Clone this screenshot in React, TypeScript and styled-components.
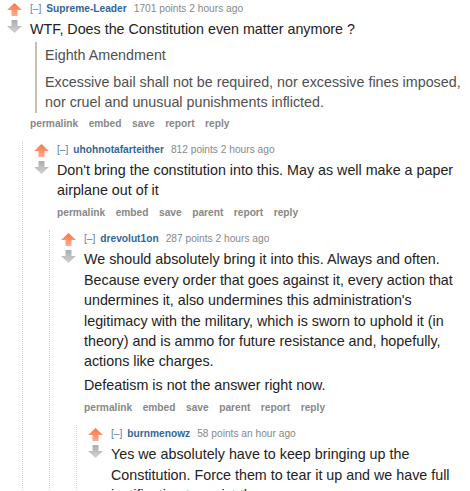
import React, { useId } from "react";
import styled, { createGlobalStyle } from "styled-components";

const GlobalStyle = createGlobalStyle`
  html, body {
    margin: 0;
    padding: 0;
    background: #fff;
    overflow: hidden;
  }
  body {
    font-family: "Liberation Sans", Arial, Helvetica, sans-serif;
  }
`;

type Block = { quote?: string[]; text?: string };

interface CommentData {
  author: string;
  score: string;
  age: string;
  body: Block[];
  buttons: string[];
  replies?: CommentData[];
}

const Page = styled.div`
  padding-right: 5px;
`;

const CommentBox = styled.div`
  padding-top: 2px;
`;

const Row = styled.div`
  display: flex;
`;

const Midcol = styled.div`
  display: flex;
  flex-direction: column;
  gap: 4px;
  width: 30px;
  flex-shrink: 0;
  padding: 1px 0 0 7px;
  box-sizing: border-box;

  svg {
    display: block;
  }
`;

const Entry = styled.div`
  flex: 1;
  min-width: 0;
`;

const Tagline = styled.div`
  font-size: 10.2px;
  line-height: 13px;
  color: #888;
  white-space: nowrap;
`;

const Expand = styled.span`
  color: #5b82b0;
  margin-right: 5px;
`;

const Author = styled.span`
  color: #369;
  font-weight: bold;
  margin-right: 7px;
`;

const Md = styled.div`
  margin-top: 4px;
  font-size: 14.3px;
  line-height: 20.4px;
  color: #222;

  p {
    margin: 0 0 3px;
  }

  > :last-child,
  blockquote > :last-child {
    margin-bottom: 0;
  }

  > blockquote:last-child {
    margin-bottom: -2px;
  }
`;

const Quote = styled.blockquote`
  margin: 0 0 3px 5px;
  padding: 3px 0 0 8px;
  border-left: 2px solid #c5c1ad;
  color: #4f4f4f;

  p {
    margin-bottom: 6px;
  }
`;

const Buttons = styled.ul`
  display: flex;
  gap: 10.5px;
  margin: 6px 0 0;
  padding: 0;
  list-style: none;
  font-size: 10.2px;
  line-height: 14px;
  font-weight: bold;
  color: #888;
`;

const Replies = styled.div`
  margin: 10px 0 0 22px;
  padding-left: 4px;
  border-left: 1px dotted #ccccf5;
`;

function Arrow({ down }: { down?: boolean }) {
  const id = useId();
  const stops = down ? ["#adadad", "#d2d2d2"] : ["#ff7440", "#ffac8e"];
  return (
    <svg width="15" height="13" viewBox="0 0 15 13">
      <defs>
        <linearGradient id={id} x1="0" y1="0" x2="0" y2="1">
          <stop offset="0" stopColor={stops[0]} />
          <stop offset="1" stopColor={stops[1]} />
        </linearGradient>
      </defs>
      <path
        d={
          down
            ? "M4.5 0H10.5V6H15L7.5 13L0 6H4.5Z"
            : "M7.5 0L15 7H10.5V13H4.5V7H0Z"
        }
        fill={`url(#${id})`}
      />
    </svg>
  );
}

function Comment({ data }: { data: CommentData }) {
  return (
    <CommentBox>
      <Row>
        <Midcol>
          <Arrow />
          <Arrow down />
        </Midcol>
        <Entry>
          <Tagline>
            <Expand>[–]</Expand>
            <Author>{data.author}</Author>
            {data.score} {data.age}
          </Tagline>
          <Md>
            {data.body.map((b, i) =>
              b.quote ? (
                <Quote key={i}>
                  {b.quote.map((q, j) => (
                    <p key={j}>{q}</p>
                  ))}
                </Quote>
              ) : (
                <p key={i}>{b.text}</p>
              )
            )}
          </Md>
          <Buttons>
            {data.buttons.map((b) => (
              <li key={b}>{b}</li>
            ))}
          </Buttons>
        </Entry>
      </Row>
      {data.replies?.map((r) => (
        <Replies key={r.author}>
          <Comment data={r} />
        </Replies>
      ))}
    </CommentBox>
  );
}

const childButtons = ["permalink", "embed", "save", "parent", "report", "reply"];

const thread: CommentData = {
  author: "Supreme-Leader",
  score: "1701 points",
  age: "2 hours ago",
  body: [
    { text: "WTF, Does the Constitution even matter anymore ?" },
    {
      quote: [
        "Eighth Amendment",
        "Excessive bail shall not be required, nor excessive fines imposed, nor cruel and unusual punishments inflicted.",
      ],
    },
  ],
  buttons: ["permalink", "embed", "save", "report", "reply"],
  replies: [
    {
      author: "uhohnotafarteither",
      score: "812 points",
      age: "2 hours ago",
      body: [
        {
          text: "Don't bring the constitution into this. May as well make a paper airplane out of it",
        },
      ],
      buttons: childButtons,
      replies: [
        {
          author: "drevolut1on",
          score: "287 points",
          age: "2 hours ago",
          body: [
            {
              text: "We should absolutely bring it into this. Always and often. Because every order that goes against it, every action that undermines it, also undermines this administration's legitimacy with the military, which is sworn to uphold it (in theory) and is ammo for future resistance and, hopefully, actions like charges.",
            },
            { text: "Defeatism is not the answer right now." },
          ],
          buttons: childButtons,
          replies: [
            {
              author: "burnmenowz",
              score: "58 points",
              age: "an hour ago",
              body: [
                {
                  text: "Yes we absolutely have to keep bringing up the Constitution. Force them to tear it up and we have full justification to resist them.",
                },
              ],
              buttons: childButtons,
            },
          ],
        },
      ],
    },
  ],
};

export default function App() {
  return (
    <Page>
      <GlobalStyle />
      <Comment data={thread} />
    </Page>
  );
}
